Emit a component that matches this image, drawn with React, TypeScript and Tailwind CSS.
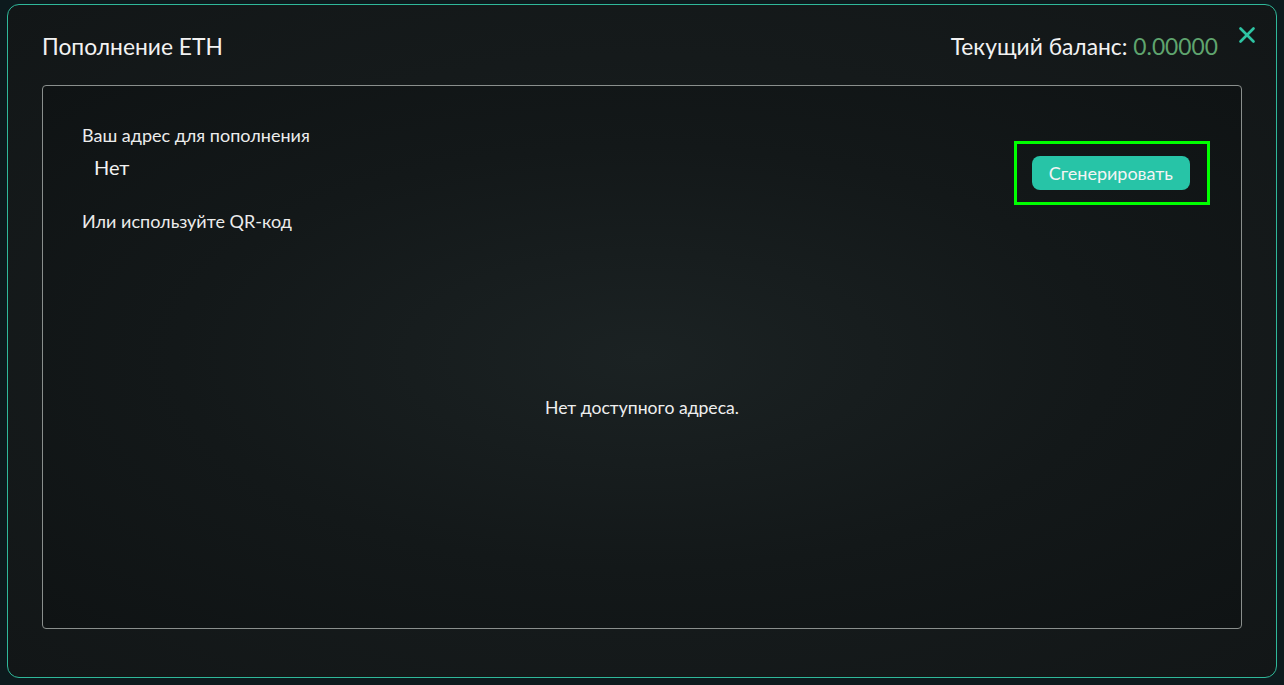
import { X } from 'lucide-react';

export default function App() {
  return (
    <div
      className="h-[685px] w-full bg-[#0d1a1d] pt-[4px] pl-[7px] pr-[7px] pb-[7px]"
      style={{ fontFamily: 'Lato, "Noto Sans", sans-serif' }}
    >
      <div className="relative flex h-[674px] flex-col rounded-[12px] border border-[#2fb89a] bg-[radial-gradient(ellipse_at_center,#1b2223_0%,#151a1b_60%,#121617_100%)] px-[34px]">
        <div className="flex h-[80px] items-center justify-between pt-[2px]">
          <h2 className="text-[22.8px] text-[#f2f2f2]">Пополнение ETH</h2>
          <div className="mr-[24px] text-[22.8px] text-[#f2f2f2]">
            Текущий баланс: <span className="text-[#5fa46e]">0.00000</span>
          </div>
        </div>
        <button className="absolute right-[16px] top-[17px] text-[#2ec4a3]">
          <X size={26} strokeWidth={2.5} />
        </button>

        <div className="relative flex h-[544px] flex-col rounded-[4px] border border-[#8a8f8d] bg-[radial-gradient(ellipse_at_center,#1b2223_0%,#131819_55%,#0f1314_100%)] px-[39px] pt-[36px]">
          <div className="flex items-start justify-between">
            <div className="flex flex-col">
              <span className="text-[18px] leading-[26px] text-[#ececec]">Ваш адрес для пополнения</span>
              <span className="mt-[5px] pl-[12px] text-[20px] leading-[28px] text-[#f2f2f2]">Нет</span>
              <span className="mt-[27px] text-[18px] leading-[26px] text-[#ececec]">Или используйте QR-код</span>
            </div>
            <div className="mr-[-8px] mt-[19px] border-[3px] border-[#00ff00] py-[12px] pl-[15px] pr-[17px]">
              <button className="h-[34px] rounded-[8px] bg-[#27c4a7] px-[17px] text-[18px] text-[#f4f4f4]">
                Сгенерировать
              </button>
            </div>
          </div>
          <div className="flex flex-1 items-start justify-center pt-[161px]">
            <span className="text-[17.6px] text-[#efefef]">Нет доступного адреса.</span>
          </div>
        </div>
      </div>
    </div>
  );
}
